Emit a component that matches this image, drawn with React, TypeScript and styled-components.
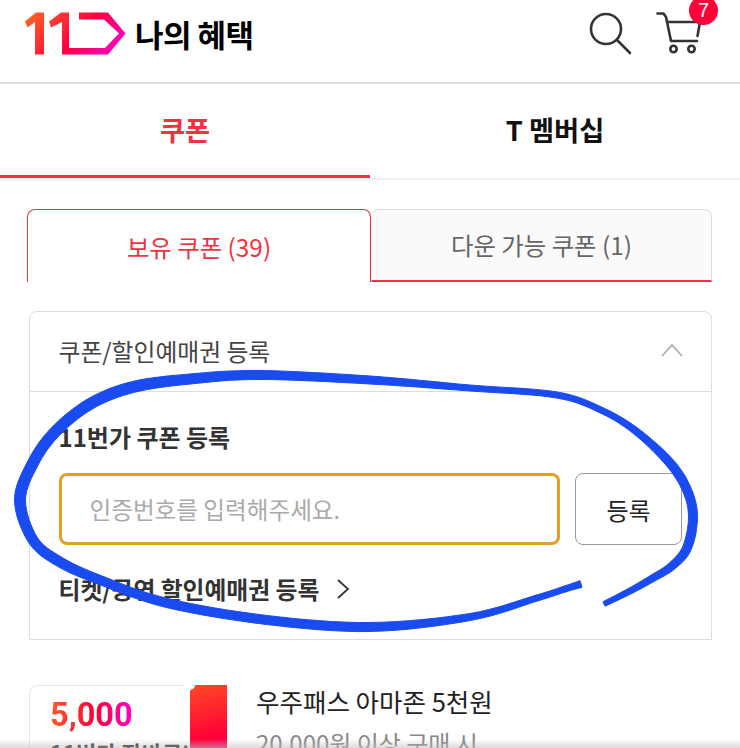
import { useState } from 'react'
import styled, { createGlobalStyle } from 'styled-components'

const GlobalStyle = createGlobalStyle`
  html, body {
    margin: 0;
    padding: 0;
    background: #fff;
  }
  * {
    box-sizing: border-box;
  }
`

const Page = styled.div`
  position: relative;
  width: 740px;
  height: 748px;
  overflow: hidden;
  background: #fff;
  color: #111;
  font-family: 'Noto Sans CJK KR', 'Noto Sans', sans-serif;
`

const Header = styled.header`
  display: flex;
  align-items: center;
  height: 84px;
  padding: 0 0 14px 25px;
  border-bottom: 2px solid #ddd;
`

const Title = styled.h1`
  margin: 0 0 0 9px;
  font-size: 31px;
  line-height: 40px;
  font-weight: 700;
  letter-spacing: -0.5px;
  color: #000;
`

const HeaderIcons = styled.div`
  display: flex;
  align-items: flex-start;
  gap: 23px;
  margin-left: auto;
  margin-right: 38px;
`

const IconWrap = styled.div`
  position: relative;
  height: 42px;
`

const Badge = styled.span`
  position: absolute;
  top: -16px;
  right: -16px;
  width: 29px;
  height: 29px;
  border-radius: 50%;
  background: #ff0038;
  color: #fff;
  font-family: 'Liberation Sans', sans-serif;
  font-size: 20px;
  line-height: 29px;
  text-align: center;
`

const MainTabs = styled.nav`
  display: flex;
  height: 96px;
  border-bottom: 2px solid #eee;
`

const MainTab = styled.button<{ $active?: boolean }>`
  flex: 1;
  height: 94px;
  padding: 0 0 ${(p) => (p.$active ? '2px' : '5px')};
  border: 0;
  border-bottom: ${(p) => (p.$active ? '3px solid #f43142' : '0')};
  background: transparent;
  color: ${(p) => (p.$active ? '#f43142' : '#111')};
  font-family: inherit;
  font-size: 27.3px;
  font-weight: 700;
`

const SubTabs = styled.div`
  display: flex;
  height: 73px;
  margin: 29px 28px 0 27px;
`

const SubTab = styled.button<{ $active?: boolean }>`
  flex: ${(p) => (p.$active ? '0 0 344px' : '1')};
  padding: 0 0 ${(p) => (p.$active ? '0' : '2px')};
  border: 1px solid ${(p) => (p.$active ? '#f43142' : '#ddd')};
  border-bottom: ${(p) => (p.$active ? '0' : '2px solid #f43142')};
  border-left-color: ${(p) => (p.$active ? '#f43142' : 'transparent')};
  border-radius: 8px 8px 0 0;
  background: ${(p) => (p.$active ? '#fff' : '#fafafa')};
  color: ${(p) => (p.$active ? '#f43142' : '#666')};
  font-family: inherit;
  font-size: 24.4px;
`

const Panel = styled.section`
  height: 329px;
  margin: 29px 28px 0 29px;
  border: 1.5px solid #ddd;
  border-radius: 8px 8px 0 0;
`

const PanelHead = styled.div`
  display: flex;
  align-items: center;
  justify-content: space-between;
  height: 80px;
  padding: 0 28px 3px 28.5px;
  border-bottom: 1.5px solid #ddd;
  font-size: 23.8px;
  color: #444;
`

const PanelBody = styled.div`
  padding: 28px 29px 0 28.5px;
`

const Label = styled.div`
  font-size: 24px;
  line-height: 34px;
  font-weight: 700;
  color: #333;
`

const Form = styled.div`
  display: flex;
  gap: 15px;
  margin-top: 19px;
`

const CodeInput = styled.input`
  flex: 1;
  min-width: 0;
  height: 72px;
  padding: 0 28px;
  border: 3px solid #e5a020;
  border-radius: 8px;
  outline: 0;
  font-family: inherit;
  font-size: 23.6px;
  color: #111;

  &::placeholder {
    color: #aaa;
    opacity: 1;
  }
`

const SubmitButton = styled.button`
  width: 107px;
  height: 72px;
  border: 1.5px solid #999;
  border-radius: 8px;
  background: #fff;
  font-family: inherit;
  font-size: 24px;
  color: #222;
`

const TicketLink = styled.a`
  display: flex;
  align-items: center;
  gap: 18px;
  margin-top: 25px;
  font-size: 23.8px;
  line-height: 38px;
  font-weight: 700;
  color: #333;
`

const CouponRow = styled.article`
  display: flex;
  margin: 45px 0 0 29px;
`

const Ticket = styled.div`
  width: 161px;
  height: 120px;
  padding: 8px 20px;
  border: 1.5px solid #e8e8e8;
  border-right: 0;
  border-radius: 8px 0 0 0;
`

const Amount = styled.div`
  width: fit-content;
  font-family: 'Roboto', sans-serif;
  font-size: 32.5px;
  line-height: 42px;
  font-weight: 700;
  background: linear-gradient(90deg, #ff5a26, #ff0038 55%, #ff00c8);
  -webkit-background-clip: text;
  background-clip: text;
  color: transparent;
`

const TicketName = styled.div`
  margin-top: 1px;
  font-size: 22px;
  line-height: 30px;
  font-weight: 700;
  white-space: nowrap;
  color: #222;
`

const Stub = styled.div`
  position: relative;
  width: 37px;
  height: 120px;
  background: linear-gradient(165deg, #ff4a26, #ff0038 45%, #f0008c 70%);

  &::before {
    content: '';
    position: absolute;
    top: -5px;
    left: -5px;
    width: 10px;
    height: 10px;
    border-radius: 50%;
    background: #fff;
  }
`

const CouponInfo = styled.div`
  margin-left: 29px;
`

const CouponTitle = styled.div`
  margin-top: -2px;
  font-size: 25.5px;
  line-height: 36px;
  color: #222;
`

const CouponCondition = styled.div`
  margin-top: 7px;
  font-size: 24px;
  line-height: 34px;
  color: #888;
`

const BottomFade = styled.div`
  position: absolute;
  left: 0;
  right: 0;
  bottom: 0;
  height: 9px;
  background: linear-gradient(rgba(210, 210, 210, 0), rgba(190, 190, 190, 0.55));
`

const Scribble = styled.svg`
  position: absolute;
  top: 0;
  left: 0;
  pointer-events: none;
`

// x, y, 그 지점의 펜 두께
const PEN: number[][] = [
  [604, 604, 6], [630, 591, 7], [653, 578, 8], [672, 566, 9], [687, 548, 10], [693, 517, 10],
  [687, 490, 10], [670, 463, 10], [637, 432, 8], [603, 411, 7], [557, 395, 7],
  [470, 388, 7], [370, 380, 9], [260, 375, 10], [190, 379, 11], [133, 387, 12],
  [90, 404, 12], [55, 432, 12], [33, 463, 12], [20, 500, 12], [33, 540, 11],
  [60, 562, 11], [100, 580, 10], [167, 603, 10], [267, 620, 10], [370, 627, 10],
  [470, 617, 8], [537, 598, 7], [565, 589, 7], [581, 584, 8],
]

const penOutline = () => {
  const samples: number[][] = []
  for (let i = 0; i < PEN.length - 1; i++) {
    const p0 = PEN[Math.max(i - 1, 0)]
    const p1 = PEN[i]
    const p2 = PEN[i + 1]
    const p3 = PEN[Math.min(i + 2, PEN.length - 1)]
    for (let s = 0; s < 8; s++) {
      const t = s / 8
      samples.push(
        [0, 1, 2].map(
          (k) =>
            0.5 *
            (2 * p1[k] +
              (p2[k] - p0[k]) * t +
              (2 * p0[k] - 5 * p1[k] + 4 * p2[k] - p3[k]) * t * t +
              (3 * p1[k] - p0[k] - 3 * p2[k] + p3[k]) * t * t * t),
        ),
      )
    }
  }
  samples.push(PEN[PEN.length - 1])
  const left: string[] = []
  const right: string[] = []
  samples.forEach((p, i) => {
    const a = samples[Math.max(i - 1, 0)]
    const b = samples[Math.min(i + 1, samples.length - 1)]
    const len = Math.hypot(b[0] - a[0], b[1] - a[1]) || 1
    const nx = ((b[1] - a[1]) / len) * (p[2] / 2 - 0.5)
    const ny = (-(b[0] - a[0]) / len) * (p[2] / 2 - 0.5)
    left.push(`${(p[0] + nx).toFixed(1)},${(p[1] + ny).toFixed(1)}`)
    right.unshift(`${(p[0] - nx).toFixed(1)},${(p[1] - ny).toFixed(1)}`)
  })
  return [...left, ...right].join(' ')
}

const Logo = () => (
  <svg width="101" height="44" viewBox="0 0 101 44" fill="none">
    <defs>
      <linearGradient id="logo" x1="0" y1="0.3" x2="1" y2="0.7">
        <stop offset="0" stopColor="#ff5a26" />
        <stop offset="0.55" stopColor="#ff0040" />
        <stop offset="1" stopColor="#ff00c8" />
      </linearGradient>
    </defs>
    <path
      d="M0 9.5 11 0.5 19 0.5 19 42.5 10 42.5 10 10 2.5 15.5Z M24 9.5 36 0.5 44 0.5 44 36 80 36 94 21.5 79 7.5 54 7.5 54 0.5 83 0.5 100.5 21.5 83 42.5 37 42.5 37 10 26 15.5Z"
      fill="url(#logo)"
    />
  </svg>
)

const SearchIcon = () => (
  <svg width="44" height="44" viewBox="0 0 44 44" fill="none" stroke="#333" strokeWidth="2.6" strokeLinecap="round">
    <circle cx="17" cy="17" r="15" />
    <path d="M28 28 41 41" />
  </svg>
)

const CartIcon = () => (
  <svg width="46" height="44" viewBox="0 0 46 44" fill="none" stroke="#333" strokeWidth="2.6" strokeLinecap="round" strokeLinejoin="round">
    <path d="M1.5 1.5H7.5L10 5 15 29H41" />
    <path d="M11 10H44L41.5 24" />
    <circle cx="17.5" cy="37" r="3.2" />
    <circle cx="35.5" cy="37" r="3.2" />
  </svg>
)

const Chevron = ({ up }: { up?: boolean }) =>
  up ? (
    <svg width="22" height="14" viewBox="0 0 22 14" fill="none" stroke="#aaa" strokeWidth="1.6">
      <path d="M1 13 11 2 21 13" />
    </svg>
  ) : (
    <svg width="12" height="20" viewBox="0 0 12 20" fill="none" stroke="#333" strokeWidth="1.8">
      <path d="M1 1 11 10 1 19" />
    </svg>
  )

export default function App() {
  const [tab] = useState('coupon')

  return (
    <Page>
      <GlobalStyle />
      <Header>
        <Logo />
        <Title>나의 혜택</Title>
        <HeaderIcons>
          <SearchIcon />
          <IconWrap>
            <CartIcon />
            <Badge>7</Badge>
          </IconWrap>
        </HeaderIcons>
      </Header>

      <MainTabs>
        <MainTab $active={tab === 'coupon'}>쿠폰</MainTab>
        <MainTab>T 멤버십</MainTab>
      </MainTabs>

      <SubTabs>
        <SubTab $active>보유 쿠폰 (39)</SubTab>
        <SubTab>다운 가능 쿠폰 (1)</SubTab>
      </SubTabs>

      <Panel>
        <PanelHead>
          쿠폰/할인예매권 등록
          <Chevron up />
        </PanelHead>
        <PanelBody>
          <Label>11번가 쿠폰 등록</Label>
          <Form>
            <CodeInput placeholder="인증번호를 입력해주세요." />
            <SubmitButton>등록</SubmitButton>
          </Form>
          <TicketLink>
            티켓/공연 할인예매권 등록
            <Chevron />
          </TicketLink>
        </PanelBody>
      </Panel>

      <CouponRow>
        <Ticket>
          <Amount>5,000</Amount>
          <TicketName>11번가 장바구니</TicketName>
        </Ticket>
        <Stub />
        <CouponInfo>
          <CouponTitle>우주패스 아마존 5천원</CouponTitle>
          <CouponCondition>20,000원 이상 구매 시</CouponCondition>
        </CouponInfo>
      </CouponRow>

      <BottomFade />

      {/* 손으로 그린 파란 동그라미 */}
      <Scribble width="740" height="748" viewBox="0 0 740 748">
        <polygon points={penOutline()} fill="#1a4bf0" stroke="#1a4bf0" strokeWidth="1" strokeLinejoin="round" />
      </Scribble>
    </Page>
  )
}
